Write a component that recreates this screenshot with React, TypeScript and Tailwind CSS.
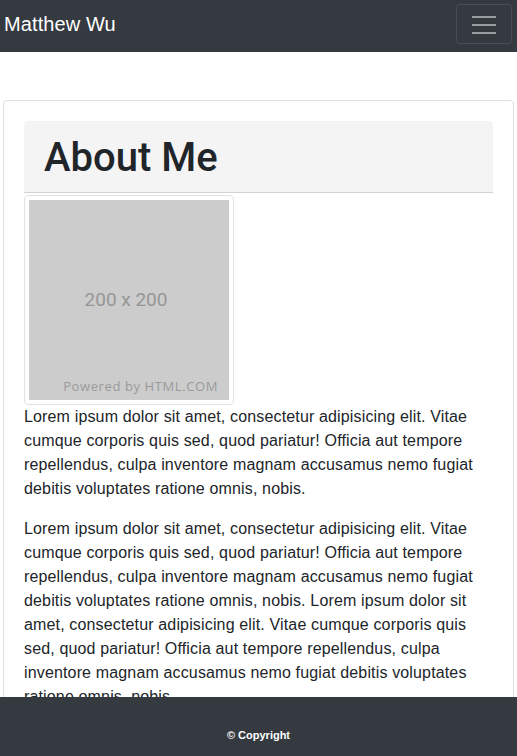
const lorem =
  "Lorem ipsum dolor sit amet, consectetur adipisicing elit. Vitae cumque corporis quis sed, quod pariatur! Officia aut tempore repellendus, culpa inventore magnam accusamus nemo fugiat debitis voluptates ratione omnis, nobis.";

function Navbar() {
  return (
    <nav className="flex h-[52px] items-start bg-[#343a40]">
      <div className="flex h-[40px] w-full items-center justify-between pt-[4px] box-content">
        <a className="pl-[4px] text-[20px] leading-[30px] tracking-[0.1px] text-white" href="#">
          Matthew Wu
        </a>
        <button className="mr-[5px] flex h-[40px] w-[56px] items-center justify-center rounded-[4px] border border-white/10">
          <svg width="30" height="30" viewBox="0 0 30 30">
            <path
              d="M3 8h24M3 16h24M3 24h24"
              stroke="rgba(255,255,255,0.5)"
              strokeWidth="2"
              strokeLinecap="butt"
            />
          </svg>
        </button>
      </div>
    </nav>
  );
}

function Placeholder() {
  return (
    <div className="w-[210px] rounded-[4px] border border-[#dee2e6] bg-white p-[4px]">
      <div className="flex h-[200px] w-[200px] flex-col items-center bg-[#cccccc]">
        <div className="mt-[89px] pr-[6px] font-['Roboto',sans-serif] text-[19px] leading-[22px] text-[#969696]">
          200 x 200
        </div>
        <div className="mt-auto mb-[6px] mr-[11px] self-end font-['Open_Sans',sans-serif] text-[13px] leading-[16px] tracking-[0.6px] text-[#9a9a9a]">
          Powered by HTML.COM
        </div>
      </div>
    </div>
  );
}

export default function App() {
  return (
    <div className="min-h-[756px] bg-white font-['Liberation_Sans',Arial,sans-serif] text-[#212529]">
      <Navbar />
      <main className="px-[3px] pt-[48px] pb-[80px]">
        <div className="rounded-[4px] border border-[#dfdfdf] p-[20px]">
          <div className="rounded-t-[4px] border-b border-[#d3d3d3] bg-[#f4f4f4] px-[20px] pt-[13px] pb-[10px]">
            <h1 className="font-['Roboto',sans-serif] text-[40px] font-medium leading-[48px]">About Me</h1>
          </div>
          <div className="mt-[2px]">
            <Placeholder />
          </div>
          <div className="text-[16px] leading-[24px] tracking-[0.15px]">
            <p className="mb-[16px]">{lorem}</p>
            <p className="mb-[16px]">
              {lorem} {lorem}
            </p>
          </div>
        </div>
      </main>
      <footer className="fixed bottom-0 left-0 right-0 h-[59px] bg-[#343a40] pt-[25px] text-center">
        <span className="text-[11px] font-bold leading-[13px] text-white">© Copyright</span>
      </footer>
    </div>
  );
}
